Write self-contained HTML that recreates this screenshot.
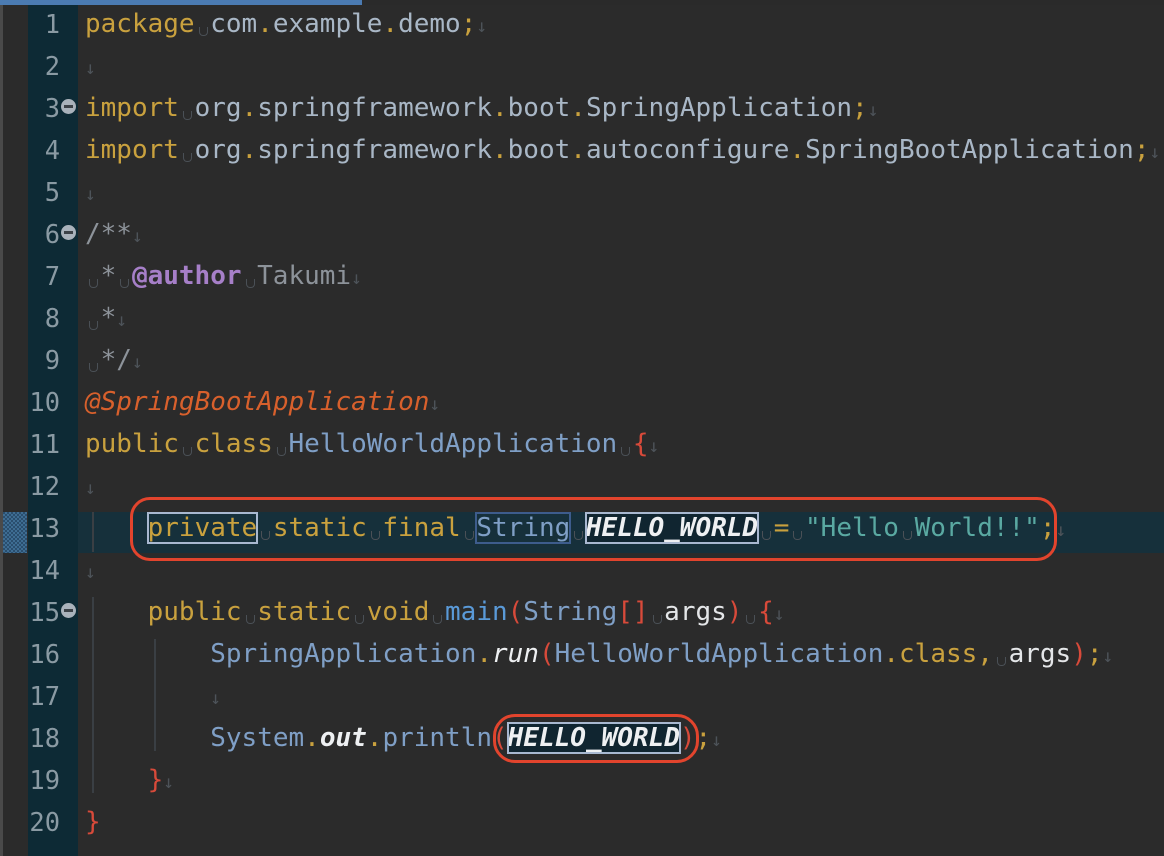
<!DOCTYPE html>
<html><head><meta charset="utf-8"><style>
html,body{margin:0;padding:0;}
body{width:1164px;height:856px;background:#2b2b2b;position:relative;overflow:hidden;font-family:"DejaVu Sans Mono","Liberation Mono",monospace;font-size:26px;}
#top{position:absolute;left:0;top:0;width:1164px;height:5px;background:#2a2a2a;}
#top b{position:absolute;left:0;top:0;width:362px;height:5px;background:#4b7bb2;}
#lstrip{position:absolute;left:0;top:5px;width:3px;height:851px;background:#4a4a4a;}
#gut{position:absolute;left:28px;top:5px;width:50px;height:851px;background:#0d2a35;}
.hl{position:absolute;left:78px;top:512px;width:1086px;height:41px;background:#16303b;}
.chk{position:absolute;left:3px;top:512px;width:24px;height:41px;background:repeating-conic-gradient(#3e6d93 0 25%,#2a4e6e 0 50%) 0 0/4px 4px;}
.ln{position:absolute;left:28px;width:32px;text-align:right;color:#8a9aa3;line-height:42px;height:42px;font-size:25.4px;}
.fold{position:absolute;left:61px;width:15px;height:15px;border-radius:50%;background:#a9b2bb;}
.fold::after{content:"";position:absolute;left:3px;top:6px;width:9px;height:3px;background:#3c4248;}
.l{position:absolute;left:85px;line-height:42px;height:42px;white-space:pre;color:#a9b7c6;}
.k{color:#c9a13e}.c{color:#7f9fc6}.m{color:#5a9ad8}.st{color:#5aa9a2}.an{color:#d8602c;font-style:italic}
.au{color:#a67fc8;font-weight:bold}.cm{color:#8d939a}.r{color:#d84a3a}.w{color:#eef0f2;font-weight:bold;font-style:italic}
.d{color:#c9a13e}
.nl{color:#4d5359;font-size:18px}
.s{display:inline-block;width:1ch;height:20px;position:relative;}
.s::after{content:"";position:absolute;left:4px;bottom:-4px;width:7px;height:8px;border:1.5px solid #4a5056;border-top:none;border-radius:0 0 4px 4px;}
.bx{outline:2px solid #a8b8d0;outline-offset:-1px;}
.bx2{outline:2px solid #3d5c8c;outline-offset:-1px;}
.bx3{outline:2px solid #a8b8d0;outline-offset:-1px;background:#102530;}
.ig{position:absolute;width:2px;background:#3a3f44;}
.red{position:absolute;border:3px solid #e2442d;box-sizing:border-box;}
</style></head><body>
<div id="top"><b></b></div>
<div id="lstrip"></div>
<div id="gut"></div>
<div class="hl"></div>
<div class="chk"></div>

<div class="ln" style="top:3px">1</div>
<div class="ln" style="top:45px">2</div>
<div class="ln" style="top:87px">3</div>
<div class="ln" style="top:129px">4</div>
<div class="ln" style="top:171px">5</div>
<div class="ln" style="top:213px">6</div>
<div class="ln" style="top:255px">7</div>
<div class="ln" style="top:297px">8</div>
<div class="ln" style="top:339px">9</div>
<div class="ln" style="top:381px">10</div>
<div class="ln" style="top:423px">11</div>
<div class="ln" style="top:465px">12</div>
<div class="ln" style="top:507px">13</div>
<div class="ln" style="top:549px">14</div>
<div class="ln" style="top:591px">15</div>
<div class="ln" style="top:633px">16</div>
<div class="ln" style="top:675px">17</div>
<div class="ln" style="top:717px">18</div>
<div class="ln" style="top:759px">19</div>
<div class="ln" style="top:801px">20</div>
<div class="fold" style="top:99px"></div>
<div class="fold" style="top:225px"></div>
<div class="fold" style="top:603px"></div>

<div class="ig" style="left:92px;top:512px;height:40px"></div>
<div class="ig" style="left:92px;top:597px;height:196px"></div>
<div class="ig" style="left:154px;top:639px;height:112px"></div>

<div class="l" style="top:3px"><span class="k">package</span><i class="s"></i>com<span class="d">.</span>example<span class="d">.</span>demo<span class="d">;</span><span class="nl">↓</span></div>
<div class="l" style="top:45px"><span class="nl">↓</span></div>
<div class="l" style="top:87px"><span class="k">import</span><i class="s"></i>org<span class="d">.</span>springframework<span class="d">.</span>boot<span class="d">.</span>SpringApplication<span class="d">;</span><span class="nl">↓</span></div>
<div class="l" style="top:129px"><span class="k">import</span><i class="s"></i>org<span class="d">.</span>springframework<span class="d">.</span>boot<span class="d">.</span>autoconfigure<span class="d">.</span>SpringBootApplication<span class="d">;</span><span class="nl">↓</span></div>
<div class="l" style="top:171px"><span class="nl">↓</span></div>
<div class="l cm" style="top:213px">/**<span class="nl">↓</span></div>
<div class="l cm" style="top:255px"><i class="s"></i>*<i class="s"></i><span class="au">@author</span><i class="s"></i>Takumi<span class="nl">↓</span></div>
<div class="l cm" style="top:297px"><i class="s"></i>*<span class="nl">↓</span></div>
<div class="l cm" style="top:339px"><i class="s"></i>*/<span class="nl">↓</span></div>
<div class="l" style="top:381px"><span class="an">@SpringBootApplication</span><span class="nl">↓</span></div>
<div class="l" style="top:423px"><span class="k">public</span><i class="s"></i><span class="k">class</span><i class="s"></i><span class="c">HelloWorldApplication</span><i class="s"></i><span class="r">{</span><span class="nl">↓</span></div>
<div class="l" style="top:465px"><span class="nl">↓</span></div>
<div class="l" style="top:507px">    <span class="k bx">private</span><i class="s"></i><span class="k">static</span><i class="s"></i><span class="k">final</span><i class="s"></i><span class="c bx2">String</span><i class="s"></i><span class="w bx3">HELLO_WORLD</span><i class="s"></i><span class="d">=</span><i class="s"></i><span class="st">"Hello<i class="s"></i>World!!"</span><span class="d">;</span><span class="nl">↓</span></div>
<div class="l" style="top:549px"><span class="nl">↓</span></div>
<div class="l" style="top:591px">    <span class="k">public</span><i class="s"></i><span class="k">static</span><i class="s"></i><span class="k">void</span><i class="s"></i><span class="m">main</span><span class="r">(</span><span class="c">String</span><span class="r">[]</span><i class="s"></i><span style="color:#e4e6e8">args</span><span class="r">)</span><i class="s"></i><span class="r">{</span><span class="nl">↓</span></div>
<div class="l" style="top:633px">        <span class="c">SpringApplication</span><span class="d">.</span><span class="w" style="font-weight:normal">run</span><span class="r">(</span><span class="c">HelloWorldApplication</span><span class="d">.</span><span class="k">class</span><span class="d">,</span><i class="s"></i><span style="color:#e4e6e8">args</span><span class="r">)</span><span class="d">;</span><span class="nl">↓</span></div>
<div class="l" style="top:675px">        <span class="nl">↓</span></div>
<div class="l" style="top:717px">        <span class="c">System</span><span class="d">.</span><span class="w">out</span><span class="d">.</span><span class="c">println</span><span class="r">(</span><span class="w bx3">HELLO_WORLD</span><span class="r">)</span><span class="d">;</span><span class="nl">↓</span></div>
<div class="l" style="top:759px">    <span class="r">}</span><span class="nl">↓</span></div>
<div class="l" style="top:801px"><span class="r">}</span></div>

<div class="red" style="left:130px;top:497px;width:927px;height:64px;border-radius:20px"></div>
<div class="red" style="left:493px;top:714px;width:206px;height:49px;border-radius:22px"></div>
</body></html>
